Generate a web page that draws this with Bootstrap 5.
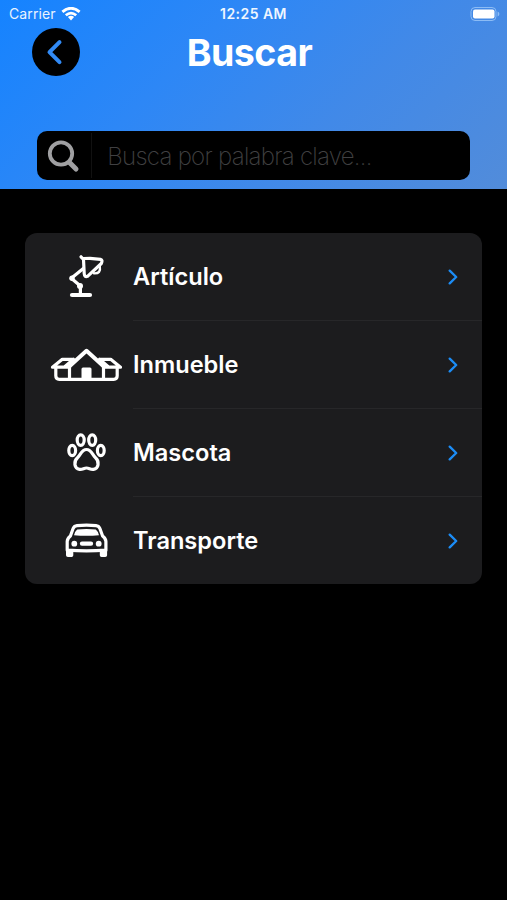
<!DOCTYPE html>
<html lang="es">
<head>
<meta charset="utf-8">
<meta name="viewport" content="width=device-width, initial-scale=1">
<title>Buscar</title>
<link rel="stylesheet" href="https://cdn.jsdelivr.net/npm/bootstrap@5.3.0/dist/css/bootstrap.min.css">
<style>
body{background:#000;font-family:Inter,"Liberation Sans",sans-serif;color:#fff;min-height:900px}
svg{display:block;flex:none}
.hero{height:189px;background:linear-gradient(135deg,#1583ff 0%,#2d87f6 35%,#4189e8 65%,#528cda 100%)}
.status{height:28px;font-size:14px;line-height:28px;padding:0 6px 0 9px}
.status .side{flex:1 1 0}
.carrier{letter-spacing:.1px;margin-right:5px;color:#e9f3ff}
.clock{font-weight:600;font-size:14px;letter-spacing:.45px;color:#eef6ff;margin-left:-3px}
.titlebar{height:48px;padding:0 32px}
.back{width:48px;height:48px;background:#000}
.titlebar h1{font-size:37.5px;font-weight:700;line-height:46px;letter-spacing:-.5px;padding:2px 56px 0 0}
.search{height:49px;margin:55px 37px 0;background:#000;border-radius:10px}
.search .glass{width:56px;height:45px;border-right:1px solid #111}
.search input{color:#bbb;font-size:24px;font-weight:200;letter-spacing:-.72px;padding:2px 0 0 15.3px;outline:0}
.search input::placeholder{color:#404042;opacity:1}
.menu{margin:44px 25px 0;border-radius:12px;background:#1c1c1e;overflow:hidden;height:351px}
.menu a{height:88px;color:#fff;font-size:23.6px;font-weight:600}
.menu .label{height:88px;border-bottom:1px solid #272729;padding:1px 24px 0 0}
.menu a:last-child .label{border:0;padding-top:0;padding-bottom:1px}
.ico{fill:none;stroke:#fff;stroke-width:3.2px;stroke-linecap:round;stroke-linejoin:round}
.solid{fill:#fff;stroke:none}
.chev{fill:none;stroke:#1c8cf5;stroke-width:2.3;stroke-linecap:round;stroke-linejoin:round}
</style>
<script src="https://cdn.jsdelivr.net/npm/bootstrap@5.3.0/dist/js/bootstrap.bundle.min.js"></script>
</head>
<body>
<header class="hero">
  <div class="status d-flex align-items-center">
    <div class="side d-flex align-items-center"><span class="carrier">Carrier</span>
      <svg width="20" height="15" viewBox="0 0 20 15" fill="none" stroke="#fff" stroke-width="2.8"><path d="M1.4 4.9Q10-2.4 18.6 4.9M4.8 8.3Q10 3.9 15.2 8.3"/><path fill="#fff" stroke="none" d="M6.9 10.1Q10 7.6 13.1 10.1L10 13.4Z"/></svg>
    </div>
    <span class="clock">12:25 AM</span>
    <div class="side d-flex justify-content-end">
      <svg width="31" height="15" viewBox="0 0 31 15"><rect x="1" y=".5" width="25" height="13" rx="4" fill="none" stroke="#8cbcf5" stroke-width="1"/><rect x="3" y="2.4" width="21.5" height="9.2" rx="2" fill="#fff"/><path d="M27.6 4.6v4.8q1.8-.6 1.8-2.4t-1.8-2.4" fill="#8cbcf5"/></svg>
    </div>
  </div>
  <div class="titlebar d-flex align-items-center">
    <button class="back btn rounded-circle p-0 border-0" aria-label="Atrás"><svg width="48" height="48" fill="none" stroke="#318af5" stroke-width="4" stroke-linecap="round" stroke-linejoin="round"><path d="M27.5 14.2 17.5 24.2 27.5 34.2"/></svg></button>
    <h1 class="flex-fill text-center m-0">Buscar</h1>
  </div>
  <div class="search d-flex align-items-center">
    <div class="glass"><svg width="54" height="45" fill="none" stroke="#a0a0a2"><circle cx="24" cy="20.5" r="11.2" stroke-width="3.8"/><path d="M32.5 29.5 39 36" stroke-width="5" stroke-linecap="round"/></svg></div>
    <input class="flex-fill border-0 bg-transparent" type="text" placeholder="Busca por palabra clave..." aria-label="Buscar">
  </div>
</header>
<main>
  <nav class="menu">
    <a href="#" class="d-flex text-decoration-none">
      <svg class="ico" width="108" height="88" viewBox="25 233 108 88"><path d="M81 256.8 83.5 259.5 84.2 273.5Q84.5 277.5 87.5 276.3L101.3 263.5Q103 259.9 100.5 259.3L90 258.3 83.5 258.5"/><path stroke-width="2.4" d="M99.8 266.5Q101.2 273.8 94 273.3"/><path d="M83.3 268.5 71.3 278.3 80.4 286V293.5"/><circle class="solid" cx="72" cy="278.3" r="2.7"/><circle class="solid" cx="80" cy="286" r="3"/><path stroke-width="4.2" d="M72 295H90"/></svg>
      <span class="label d-flex flex-fill align-items-center justify-content-between"><span>Artículo</span><svg class="chev" width="10" height="16"><path d="M1.7 1.6 8.2 8 1.7 14.4"/></svg></span>
    </a>
    <a href="#" class="d-flex text-decoration-none">
      <svg class="ico" width="108" height="88" viewBox="25 321 108 88"><path d="M55.8 367.5V375.8Q55.8 379.3 59.3 379.3H113.7Q117.2 379.3 117.2 375.8V367.5M69.5 367V378.5M103.5 367V378.5M68.5 367.2H52.5L62.3 359.3H73.5M104.5 367.2H120.5L110.7 359.3H99.5M65 366.5 73.5 359.3M108 366.5 99.5 359.3"/><path stroke-width="4" d="M69.5 366.2 86.5 350.8 103.5 366.2"/><path class="solid" d="M81.5 369Q81.5 367.5 83 367.5H90Q91.5 367.5 91.5 369V379H81.5Z"/></svg>
      <span class="label d-flex flex-fill align-items-center justify-content-between"><span>Inmueble</span><svg class="chev" width="10" height="16"><path d="M1.7 1.6 8.2 8 1.7 14.4"/></svg></span>
    </a>
    <a href="#" class="d-flex text-decoration-none">
      <svg class="ico" width="108" height="88" viewBox="25 409 108 88"><ellipse cx="80.7" cy="440.1" rx="3.5" ry="5.2"/><ellipse cx="92.2" cy="440.1" rx="3.5" ry="5.2"/><ellipse cx="72.2" cy="450.5" rx="3.4" ry="5.1"/><ellipse cx="100.8" cy="450.5" rx="3.4" ry="5.1"/><path d="M86.5 449.5C81.5 449.5 80.8 454.8 77.5 457.8C73.3 461.5 74.2 468.5 79.5 469.3C82.5 469.8 83.8 468 86.5 468S90.5 469.8 93.5 469.3C98.8 468.5 99.7 461.5 95.5 457.8C92.2 454.8 91.5 449.5 86.5 449.5Z"/></svg>
      <span class="label d-flex flex-fill align-items-center justify-content-between"><span>Mascota</span><svg class="chev" width="10" height="16"><path d="M1.7 1.6 8.2 8 1.7 14.4"/></svg></span>
    </a>
    <a href="#" class="d-flex text-decoration-none">
      <svg class="ico" width="108" height="88" viewBox="25 497 108 88"><path d="M67.2 550.2V541.5Q67.2 538.5 70.4 536L73.2 528.3Q74.3 525.9 77 525.6Q86.5 524.6 96 525.6Q98.7 525.9 99.8 528.3L102.6 536Q105.9 538.5 105.9 541.5V550.2Q86.5 551.5 67.2 550.2Z"/><path class="solid" d="M77.2 529.6Q86.5 528.4 95.8 529.6Q98.2 531.6 99 535.2Q86.5 536.3 74 535.2Q74.8 531.6 77.2 529.6ZM66 550H73.3V555.2Q73.3 556.9 71.6 556.9H68Q66 556.9 66 555.2ZM99.8 550H107.1V555.2Q107.1 556.9 105.2 556.9H101.5Q99.8 556.9 99.8 555.2Z"/><circle class="solid" cx="74.3" cy="543.7" r="2.9"/><circle class="solid" cx="98.7" cy="543.7" r="2.9"/><path stroke-width="4.3" d="M82 543.7H91"/></svg>
      <span class="label d-flex flex-fill align-items-center justify-content-between"><span>Transporte</span><svg class="chev" width="10" height="16"><path d="M1.7 1.6 8.2 8 1.7 14.4"/></svg></span>
    </a>
  </nav>
</main>
</body>
</html>
